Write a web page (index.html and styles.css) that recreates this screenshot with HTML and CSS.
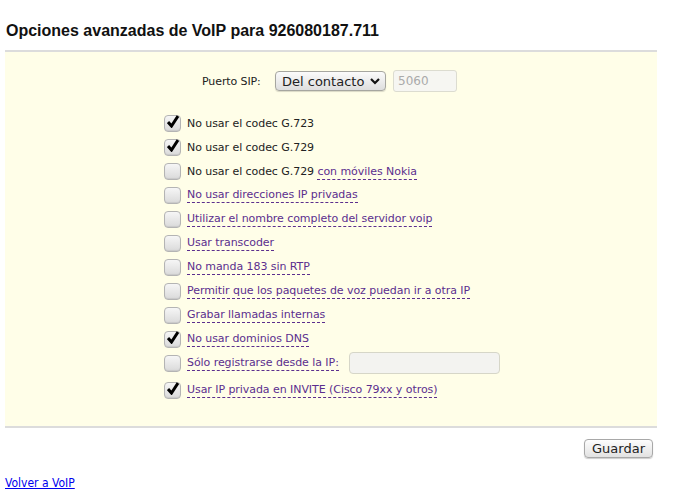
FILE: index.html
```html
<!DOCTYPE html>
<html lang="es">
<head>
    <meta charset="UTF-8">
    <title>Opciones avanzadas de VoIP</title>
    <link rel="stylesheet" href="styles.css">
</head>
<body>
    <div class="page">
        <h1 class="title">Opciones avanzadas de VoIP para 926080187.711</h1>

        <form class="panel">
            <div class="port">
                <label class="port-label">Puerto SIP:</label>
                <div class="select">Del contacto
                    <svg width="10" height="8" viewBox="0 0 10 8"><path d="M1 2 L5 6 L9 2" fill="none" stroke="#111" stroke-width="2.2"/></svg>
                </div>
                <input type="text" class="port-input" value="5060" disabled>
            </div>

            <ul class="options">
                <li><span class="box on"></span><span class="txt">No usar el codec G.723</span></li>
                <li><span class="box on"></span><span class="txt">No usar el codec G.729</span></li>
                <li><span class="box"></span><span class="txt">No usar el codec G.729 <a href="#" class="tip">con móviles Nokia</a></span></li>
                <li><span class="box"></span><a href="#" class="tip">No usar direcciones IP privadas</a></li>
                <li><span class="box"></span><a href="#" class="tip">Utilizar el nombre completo del servidor voip</a></li>
                <li><span class="box"></span><a href="#" class="tip">Usar transcoder</a></li>
                <li><span class="box"></span><a href="#" class="tip">No manda 183 sin RTP</a></li>
                <li><span class="box"></span><a href="#" class="tip">Permitir que los paquetes de voz puedan ir a otra IP</a></li>
                <li><span class="box"></span><a href="#" class="tip">Grabar llamadas internas</a></li>
                <li><span class="box on"></span><a href="#" class="tip">No usar dominios DNS</a></li>
                <li class="with-input"><span class="box"></span><a href="#" class="tip">Sólo registrarse desde la IP:</a><input type="text" class="ip-input"></li>
                <li><span class="box on"></span><a href="#" class="tip">Usar IP privada en INVITE (Cisco 79xx y otros)</a></li>
            </ul>
        </form>

        <div class="actions">
            <button class="button">Guardar</button>
        </div>

        <a href="#" class="back">Volver a VoIP</a>
    </div>
</body>
</html>
```

FILE: styles.css
```css
* {
    margin: 0;
    padding: 0;
    box-sizing: border-box;
}

body {
    background: #fff;
    color: #222;
    font: 11px "DejaVu Sans", sans-serif;
}

.page {
    padding: 0 32px 0 5px;
}

.title {
    font: bold 16px "Liberation Sans", sans-serif;
    color: #111;
    padding: 22px 0 10px 1px;
}

.panel {
    display: block;
    background: #fffee8;
    border-top: 2px solid #dcdcdc;
    border-bottom: 2px solid #dcdcdc;
    padding: 18px 0 24px;
}

.port {
    display: flex;
    align-items: center;
    height: 22px;
    padding-left: 197px;
}

.port-label {
    width: 73px;
    font-size: 11px;
    letter-spacing: -0.1px;
}

.select {
    width: 111px;
    height: 20px;
    display: flex;
    align-items: center;
    justify-content: space-between;
    padding: 0 5px 0 6px;
    font-size: 13px;
    border: 1px solid #a6a6a0;
    border-radius: 4px;
    background: linear-gradient(#fbfbfb, #dedede);
    box-shadow: 0 1px 1px rgba(0, 0, 0, 0.15);
}

.port-input {
    margin-left: 7px;
    width: 64px;
    height: 22px;
    padding: 0 4px;
    font: 12px "DejaVu Sans", sans-serif;
    color: #aaa;
    background: #f6f6f2;
    border: 1px solid #dcdcd0;
    border-radius: 3px;
}

.options {
    list-style: none;
    padding-left: 159px;
    margin-top: 19px;
    letter-spacing: -0.06px;
}

.options li {
    display: flex;
    align-items: center;
    height: 24px;
}

.options li.with-input {
    height: 24px;
    margin-bottom: 3px;
}

.box {
    width: 17px;
    height: 17px;
    margin-right: 6px;
    border: 1px solid #b4b4b4;
    border-radius: 4px;
    background: linear-gradient(#f6f6f6, #dadada);
    box-shadow: inset 0 -1px 1px rgba(0, 0, 0, 0.08);
    position: relative;
}

.box.on::after {
    content: "";
    position: absolute;
    left: 2px;
    top: -1px;
    width: 12px;
    height: 13px;
    background: url("data:image/svg+xml,%3Csvg xmlns='http://www.w3.org/2000/svg' viewBox='0 0 12 13'%3E%3Cpath d='M1 7 L4.5 11 L11 1' fill='none' stroke='%23000' stroke-width='3'/%3E%3C/svg%3E") no-repeat;
}

.txt {
    color: #222;
}

a.tip {
    color: #5b2e8e;
    text-decoration: none;
    border-bottom: 1px dashed #5b2e8e;
    padding-bottom: 1px;
}

.ip-input {
    margin-left: 10px;
    width: 151px;
    height: 22px;
    background: #f3f3f0;
    border: 1px solid #d6d6c8;
    border-radius: 4px;
}

.actions {
    display: flex;
    justify-content: flex-end;
    padding: 11px 4px 0 0;
}

.button {
    width: 69px;
    height: 19px;
    font: 13px "DejaVu Sans", sans-serif;
    color: #222;
    border: 1px solid #a8a8a8;
    border-radius: 4px;
    background: linear-gradient(#fdfdfd, #e2e2e2);
    box-shadow: 0 1px 1px rgba(0, 0, 0, 0.2);
}

.back {
    display: inline-block;
    margin-top: 18px;
    color: #00e;
    font: 12px "DejaVu Sans Condensed", "DejaVu Sans", sans-serif;
    letter-spacing: 0;
}
```
